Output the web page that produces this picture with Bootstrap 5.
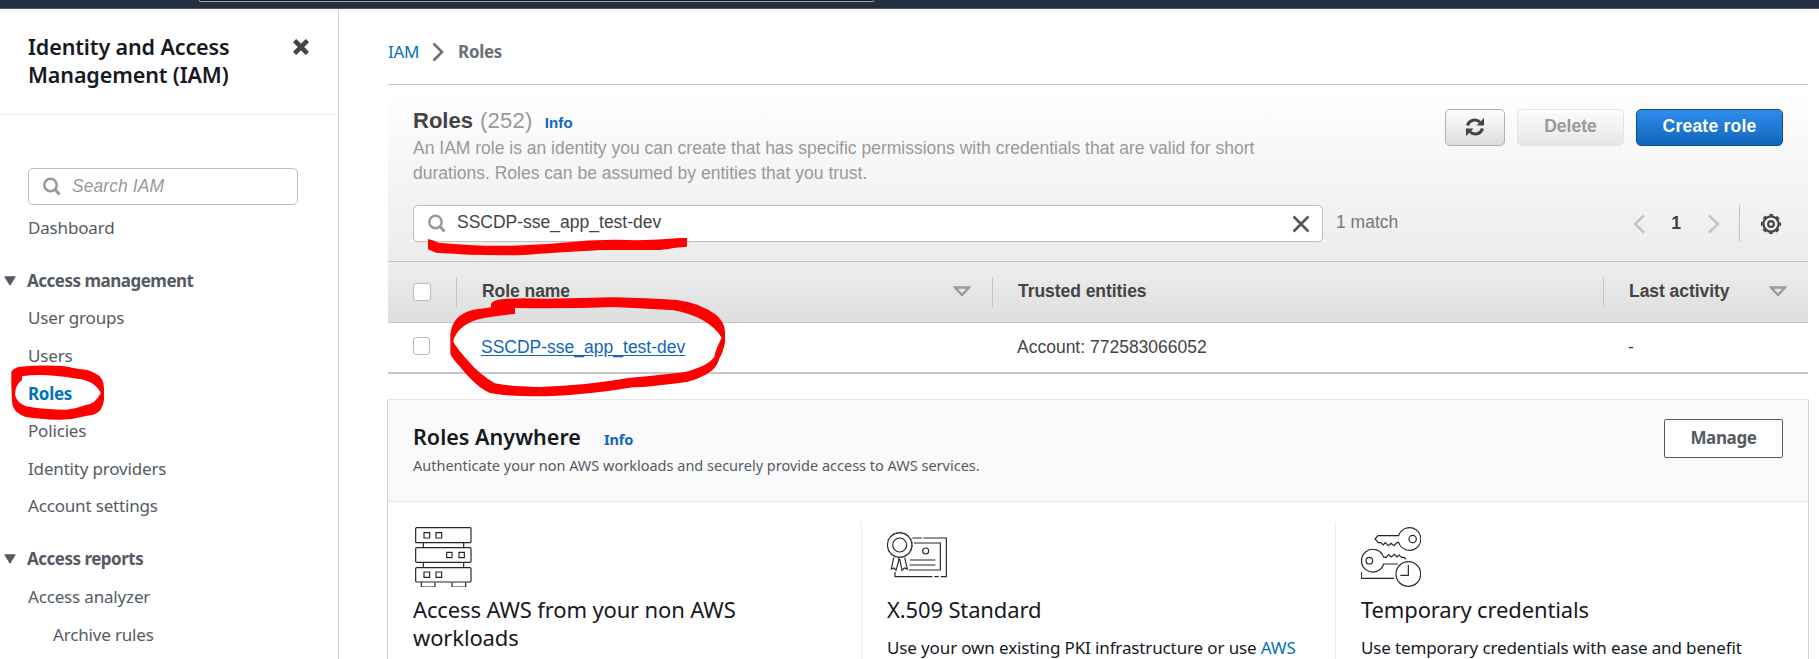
<!DOCTYPE html>
<html lang="en">
<head>
<meta charset="utf-8">
<title>IAM - Roles</title>
<link href="https://cdn.jsdelivr.net/npm/bootstrap@5.3.0/dist/css/bootstrap.min.css" rel="stylesheet">
<style>
  body { height: 659px; overflow: hidden; background: #fff; font-family: "Noto Sans", sans-serif; font-size: 17px; color: #16191f; }
  a { text-decoration: none; color: #0073bb; }
  .topbar { height: 9px; background: #232f3e; border-bottom: 1px solid #4a5665; padding-left: 199px; }
  .topbar-search { width: 675px; height: 2px; background: #131a24; border: 1px solid #a6abb3; border-top: 0; border-radius: 0 0 3px 3px; }
  .shell { height: 650px; }
  .sidebar { width: 339px; margin-top: 1px; border-right: 1px solid #ccd4d5; flex: none; }
  .side-head { height: 105px; border-bottom: 1px solid #eaeded; padding: 23px 29px 0 28px; }
  .side-title { font-size: 21.5px; line-height: 28px; font-weight: 600; margin: 0; white-space: nowrap; letter-spacing: -.12px; }
  .side-close { margin-top: 6px; }
  .side-search { width: 270px; height: 37px; margin: 53px 0 4px 28px; padding-left: 14px; border: 1px solid #bfbfbf; border-radius: 5px; font: italic 17.5px "Liberation Sans", sans-serif; letter-spacing: .06px; color: #999; }
  .side-search span { margin-left: 11px; padding-bottom: 1px; }
  .side-nav { letter-spacing: -.17px; }
  .side-nav a, .side-group { display: block; height: 37.6px; line-height: 38px; padding-left: 28px; color: #545b64; white-space: nowrap; }
  .side-nav a.sub { padding-left: 53px; }
  .side-nav a.current { color: #0073bb; font-weight: 700; letter-spacing: -.3px; }
  .side-group { margin-top: 15.3px; padding-left: 4px; font-weight: 700; gap: 11px; letter-spacing: -.5px; }
  .main { margin-left: 49px; width: 1420px; flex: none; }
  .crumbs { height: 75px; padding-top: 10px; letter-spacing: -.33px; }
  .crumbs svg { margin: 0 14px 0 13px; }
  .crumbs span { color: #687078; font-weight: 700; }
  .aui { font-family: "Liberation Sans", sans-serif; font-size: 17.5px; color: #444; }
  .tools { height: 178px; border-top: 1px solid #c4c4c4; border-bottom: 1px solid #c4c4c4; background: linear-gradient(#fff, #ececec); padding: 24px 25px 0; }
  .tools-top { height: 96px; }
  .tools h2 { font-size: 22px; line-height: 26px; margin: -1px 0 0; font-weight: 700; }
  .tools h2 span { color: #999; font-weight: 400; letter-spacing: .25px; margin-left: 1px; }
  .tools h2 a { font-size: 15px; margin-left: 6px; color: #1166bb; letter-spacing: .1px; }
  .desc { line-height: 25px; color: #999; margin: 0; white-space: nowrap; }
  .abtn { height: 37px; border: 1px solid #b0b0b0; border-radius: 5px; background: linear-gradient(#fff, #dcdcdc); font-weight: 700; font-size: 17.5px; padding: 0 0 2px; color: #444; display: flex; align-items: center; justify-content: center; line-height: 1; width: 60px; }
  .abtn.off { width: 107px; border-color: #e4e4e4; background: linear-gradient(#fdfdfd, #e6e6e6); color: #999; }
  .abtn.go { width: 147px; border-color: #0f4a80; background: linear-gradient(#2e8dee, #1166bb); color: #fff; letter-spacing: .23px; }
  .btn-row { gap: 12px; }
  .filter { width: 910px; height: 37px; background: #fff; border: 1px solid #bfbfbf; border-radius: 5px; padding: 0 12px 0 14px; }
  .filter span { padding: 0 0 2px 11px; }
  .match { color: #777; margin-left: 13px; padding-bottom: 2px; }
  .pages b { margin: 0 27px 1px 26px; }
  .pages .rule { width: 1px; height: 37px; background: #c4c4c4; margin: 0 20px 0 19px; }
  .pages .gear { margin-right: 1px; }
  .thead-row { height: 61px; background: linear-gradient(#eee, #dedede); border-bottom: 1px solid #c4c4c4; }
  .tbody-row { height: 51px; border-bottom: 2px solid #c8c8c8; }
  .rowline { display: grid; grid-template-columns: 68px 536px 611px 1fr; align-items: center; }
  .hcell { height: 30px; border-left: 1px solid #c4c4c4; padding: 0 21px 2px 25px; font-weight: 700; display: flex; align-items: center; justify-content: space-between; letter-spacing: -.05px; }
  .hcell svg { margin-top: 1px; }
  .bcell { padding-left: 25px; }
  .bcell a { color: #1166bb; text-decoration: underline; text-underline-offset: 2px; }
  .box { width: 18px; height: 18px; border: 1px solid #bbb; border-radius: 3px; background: #fff; margin: 0 0 1px 25px; }
  .tbody-row .box { width: 17px; margin-bottom: 3px; }
  .anywhere { margin: 25px 0 0 -1px; width: 1422px; height: 260px; border: 1px solid #ccd4d5; border-top-color: #e6e9e9; border-bottom: 0; }
  .any-head { height: 102px; background: #fafafa; border-bottom: 1px solid #e6e9e9; padding: 19px 25px 0; }
  .any-head h2 { font-size: 21.5px; line-height: 28px; font-weight: 600; margin: 4px 0 0; letter-spacing: .03px; }
  .any-head h2 a { font-size: 14.5px; font-weight: 700; margin-left: 23px; color: #1166bb; letter-spacing: -.15px; }
  .any-head p { font-size: 14.5px; line-height: 20px; color: #545b64; margin: 2px 0 0; white-space: nowrap; }
  .manage { width: 119px; height: 39px; border: 1px solid #545b64; border-radius: 2px; background: #fff; color: #545b64; font-weight: 700; line-height: 36px; text-align: center; letter-spacing: -.35px; }
  .feats { display: grid; grid-template-columns: 473px 474px 1fr; margin-top: 20px; height: 137px; }
  .feat { border-left: 1px solid #eaeded; padding: 0 10px 0 25px; white-space: nowrap; }
  .feat:first-child { border-left-color: transparent; }
  .feat h3 { font-size: 22px; line-height: 28px; font-weight: 400; margin: 8px 0 12px; letter-spacing: -.14px; }
  .feat:first-child h3 { margin-left: -1px; }
  .feat p { line-height: 25px; margin: 0; letter-spacing: -.13px; }
  .feat svg { display: block; margin-top: 5px; }
  .marks { position: absolute; left: 0; top: 0; pointer-events: none; }
</style>
</head>
<body>
<header class="topbar"><div class="topbar-search"></div></header>
<div class="shell d-flex">
  <aside class="sidebar">
    <div class="side-head d-flex justify-content-between align-items-start">
      <h1 class="side-title">Identity and Access<br>Management (IAM)</h1>
      <svg class="side-close" width="16" height="16" viewBox="0 0 16 16"><path d="M3.2 3.2 12.8 12.8M12.8 3.2 3.2 12.8" stroke="#444" stroke-width="4.600" stroke-linecap="square"/></svg>
    </div>
    <div class="side-search d-flex align-items-center">
      <svg width="18" height="19" viewBox="0 0 18 19" fill="none" stroke="#999"><circle cx="7.500" cy="8" r="6.200" stroke-width="2.500"/><path d="m12 12.500 4.500 5" stroke-width="3"/></svg>
      <span>Search IAM</span>
    </div>
    <nav class="side-nav">
      <a href="#">Dashboard</a>
      <div class="side-group d-flex align-items-center"><svg width="12" height="10" viewBox="0 0 12 10"><path d="M.8.8h10.400L6 9.200z" fill="#545b64" stroke="#545b64" stroke-linejoin="round"/></svg>Access management</div>
      <a href="#">User groups</a>
      <a href="#">Users</a>
      <a href="#" class="current">Roles</a>
      <a href="#">Policies</a>
      <a href="#">Identity providers</a>
      <a href="#">Account settings</a>
      <div class="side-group d-flex align-items-center"><svg width="12" height="10" viewBox="0 0 12 10"><path d="M.8.8h10.400L6 9.200z" fill="#545b64" stroke="#545b64" stroke-linejoin="round"/></svg>Access reports</div>
      <a href="#">Access analyzer</a>
      <a href="#" class="sub">Archive rules</a>
    </nav>
  </aside>
  <main class="main">
    <div class="crumbs d-flex align-items-center">
      <a href="#">IAM</a>
      <svg width="12" height="20" viewBox="0 0 12 20" fill="none" stroke="#687078" stroke-width="2.600"><path d="m1.500 1.500 8.500 8.500-8.500 8.500"/></svg>
      <span>Roles</span>
    </div>
    <section class="aui">
      <div class="tools">
        <div class="tools-top d-flex justify-content-between align-items-start">
          <div>
            <h2>Roles <span>(252)</span> <a href="#">Info</a></h2>
            <p class="desc">An IAM role is an identity you can create that has specific permissions with credentials that are valid for short<br>durations. Roles can be assumed by entities that you trust.</p>
          </div>
          <div class="btn-row d-flex">
            <button class="abtn" aria-label="Refresh"><svg width="20" height="20" viewBox="0 0 20 20" fill="none" stroke="#444" stroke-width="3"><path d="M2.500 8.500A7.500 7.500 0 0 1 15 5.200M17.500 11.500A7.500 7.500 0 0 1 5 14.800"/><path d="M19 1v7.500h-7.500zM1 19v-7.500h7.500z" fill="#444" stroke="none"/></svg></button>
            <button class="abtn off">Delete</button>
            <button class="abtn go">Create role</button>
          </div>
        </div>
        <div class="d-flex align-items-center">
          <div class="filter d-flex align-items-center">
            <svg width="18" height="19" viewBox="0 0 18 19" fill="none" stroke="#999"><circle cx="7.500" cy="8" r="6.200" stroke-width="2.500"/><path d="m12 12.500 4.500 5" stroke-width="3"/></svg>
            <span>SSCDP-sse_app_test-dev</span>
            <svg class="ms-auto" width="18" height="18" viewBox="0 0 18 18" stroke="#555" stroke-width="2.600"><path d="m1.500 1.500 15 15M16.500 1.500l-15 15"/></svg>
          </div>
          <span class="match">1 match</span>
          <div class="pages d-flex align-items-center ms-auto">
            <svg width="12" height="20" viewBox="0 0 12 20" fill="none" stroke="#c4c4c4" stroke-width="2.500"><path d="m11 1.500-9 8.500 9 8.500"/></svg>
            <b>1</b>
            <svg width="12" height="20" viewBox="0 0 12 20" fill="none" stroke="#c4c4c4" stroke-width="2.500"><path d="m1 1.500 9 8.500-9 8.500"/></svg>
            <div class="rule"></div>
            <svg class="gear" width="22" height="22" viewBox="-11 -11 22 22" fill="none" stroke="#444"><circle r="7.600" stroke-width="2.200"/><circle r="9.200" stroke-width="1.800" stroke-dasharray="3.800 3.425" stroke-dashoffset="1.900"/><circle r="2.800" stroke-width="2.200"/></svg>
          </div>
        </div>
      </div>
      <div class="thead-row rowline">
        <div class="box"></div>
        <div class="hcell">Role name<svg width="18" height="11" viewBox="0 0 18 11"><path d="M2 1.500h14L9 9z" fill="none" stroke="#999" stroke-width="2.400"/></svg></div>
        <div class="hcell">Trusted entities</div>
        <div class="hcell">Last activity<svg width="18" height="11" viewBox="0 0 18 11"><path d="M2 1.500h14L9 9z" fill="none" stroke="#999" stroke-width="2.400"/></svg></div>
      </div>
      <div class="tbody-row rowline">
        <div class="box"></div>
        <div class="bcell"><a href="#">SSCDP-sse_app_test-dev</a></div>
        <div class="bcell">Account: 772583066052</div>
        <div class="bcell">-</div>
      </div>
    </section>
    <section class="anywhere">
      <div class="any-head d-flex justify-content-between align-items-start">
        <div>
          <h2>Roles Anywhere<a href="#">Info</a></h2>
          <p>Authenticate your non AWS workloads and securely provide access to AWS services.</p>
        </div>
        <div class="manage">Manage</div>
      </div>
      <div class="feats">
        <div class="feat">
          <svg width="60" height="60" viewBox="0 0 180 180" fill="none" stroke="#23272f" stroke-width="3.500"><g transform="translate(-101 -410)"><rect x="106" y="412" width="166" height="45" rx="3"/><rect x="106" y="472" width="166" height="44" rx="3"/><rect x="106" y="532" width="166" height="43" rx="3"/><path d="M129 458v13M250 458v13M129 517v14M250 517v14M123 576v14h41v-14M215 576v14h41v-14M131 427h17v16h-17zM167 427h17v16h-17zM199 486h16v16h-16zM236 486h16v16h-16zM131 545h17v16h-17zM167 545h17v16h-17z"/></g></svg>
          <h3>Access AWS from your non AWS<br>workloads</h3>
        </div>
        <div class="feat">
          <svg width="60" height="60" viewBox="0 0 180 180" fill="none" stroke="#23272f" stroke-width="3.500"><g transform="translate(-82 -82)"><circle cx="120" cy="136" r="36.500"/><circle cx="120" cy="136" r="38.500" stroke-dasharray="7 5.100" stroke-width="2"/><circle cx="120" cy="136" r="21"/><circle cx="198" cy="154" r="9"/><path d="M158 115h29M191 115h69v116h-17M237 231h-13M218 231H106v-14M163 130h79v81h-95M150 181h77M150 196h77M102 174l-7 34 8-3 6 7 8-28v-8M120 178l7 34 7-7 9 3-8-34"/></g></svg>
          <h3>X.509 Standard</h3>
          <p>Use your own existing PKI infrastructure or use <a href="#">AWS</a></p>
        </div>
        <div class="feat">
          <svg width="60" height="60" viewBox="0 0 180 180" fill="none" stroke="#23272f" stroke-width="3.500"><g transform="translate(-123 -411)"><path d="M236 437a34 34 0 1 1 0 20l-7 2-7 8-9-7-8 7-9-9-6 7-7-7h-8l-10-11 9-10z"/><circle cx="278" cy="447" r="11"/><path d="M191 502a34 34 0 1 0 0 20h43M191 502h8l7-8 8 7 9-8 8 8 6-6 8 7h8l5 6"/><circle cx="148" cy="512" r="10"/><circle cx="265" cy="552" r="37"/><path d="M265 524v32h-24M124 546v19h98"/></g></svg>
          <h3>Temporary credentials</h3>
          <p>Use temporary credentials with ease and benefit</p>
        </div>
      </div>
    </section>
  </main>
</div>
<svg class="marks" width="1819" height="659" viewBox="0 0 1819 659" fill="#f00" fill-rule="evenodd">
  <path transform="translate(0 240) scale(.33333)" d="M34 432V395Q40 384 60 380Q130 374 190 378L240 388Q262 387 285 400Q312 412 312 445V480Q308 515 280 524L262 527Q220 538 180 539Q120 538 75 530Q36 515 36 485ZM66 409V420Q45 435 45 465Q52 490 78 499Q130 509 200 509Q230 506 255 496Q285 494 302 460Q298 445 275 429Q250 416 230 416Q150 402 90 406Z"/>
  <path transform="translate(380 240) scale(.33333)" d="M144-3Q162 0 175 8Q280 19 400 17Q500 15 600 4Q660-2 740 0Q820 2 900-6H921V20L880 24Q850 30 830 30H665Q520 38 430 45Q300 48 168 38L144 28Z"/>
  <path transform="translate(380 240) scale(.33333)" d="M333 202V192Q337 180 370 177Q420 173 500 176Q600 175 700 172Q800 174 890 180Q960 188 1010 226Q1035 250 1035 275V308Q1028 340 1018 355Q1012 385 980 403Q950 420 920 426Q850 435 790 441L760 442Q620 465 500 469Q390 470 330 459Q290 442 240 380Q211 350 211 340V285Q215 225 280 209ZM405 222V204Q560 207 700 201Q790 205 880 211Q985 230 1025 293Q1008 325 1003 350Q985 378 915 396Q840 406 750 413Q620 436 480 441Q390 440 345 430Q300 405 262 360Q220 312 220 303Q230 260 290 239Q340 227 405 222Z"/>
</svg>
<script src="https://cdn.jsdelivr.net/npm/bootstrap@5.3.0/dist/js/bootstrap.bundle.min.js"></script>
</body>
</html>
